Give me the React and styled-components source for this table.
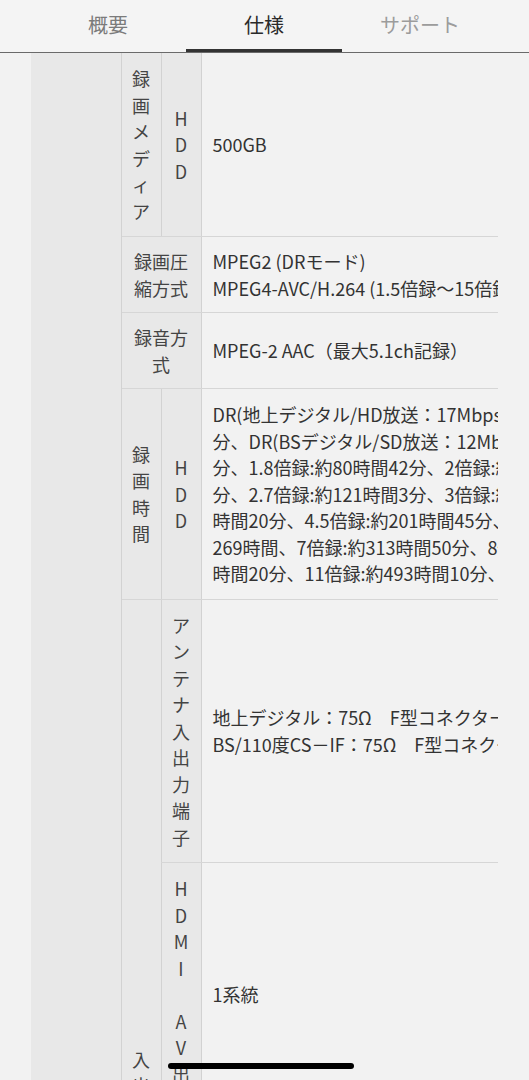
import React from "react";
import styled, { createGlobalStyle } from "styled-components";

const GlobalStyle = createGlobalStyle`
  html, body {
    margin: 0;
    padding: 0;
  }
  body {
    background: #f2f2f2;
    font-family: "Noto Sans CJK JP", "Noto Sans", sans-serif;
    color: #333;
    width: 529px;
    overflow: hidden;
  }
`;

const TabBar = styled.nav`
  display: flex;
  height: 52px;
  padding-left: 30px;
  background: #f4f4f4;
  border-bottom: 1px solid #6a6a6a;
`;

const Tab = styled.div`
  width: 156px;
  box-sizing: border-box;
  display: flex;
  align-items: center;
  justify-content: center;
  font-size: 20px;
  color: ${(p) => (p.$active ? "#2a2a2a" : p.$muted ? "#9c9c9c" : "#7b7b7b")};
  border-bottom: 3px solid ${(p) => (p.$active ? "#333" : "transparent")};
`;

const TableWrap = styled.div`
  margin-left: 31px;
  width: 467px;
  overflow: hidden;
`;

const SpecTable = styled.table`
  width: 467px;
  table-layout: fixed;
  border-collapse: collapse;
  font-size: 18px;
  line-height: 26.5px;
`;

const Outer = styled.td`
  background: #e8e8e8;
  border-right: 1px solid #d2d2d2;
  padding: 0;
`;

const Head = styled.th`
  background: #e8e8e8;
  font-weight: normal;
  color: #444;
  text-align: center;
  vertical-align: middle;
  padding: ${(p) => (p.$tight ? "11px 12px" : "12px 0")};
  border-left: 1px solid #d2d2d2;
  border-bottom: 1px solid #d6d6d6;
`;

const Value = styled.td`
  background: #f2f2f2;
  white-space: nowrap;
  vertical-align: middle;
  padding: ${(p) => (p.$tight ? "11px 11px" : "12px 11px")};
  border-left: 1px solid #d2d2d2;
  border-bottom: 1px solid #d6d6d6;
`;

const Char = styled.span`
  display: block;
  height: 26.5px;
`;

const HomeBar = styled.div`
  position: fixed;
  left: 168px;
  bottom: 11px;
  width: 186px;
  height: 6px;
  border-radius: 3px;
  background: #000;
`;

function VText({ text }) {
  return text.split("").map((c, i) => (
    <Char key={i}>{c === " " ? "\u00a0" : c}</Char>
  ));
}

function Lines({ lines }) {
  return lines.map((l, i) => <div key={i}>{l}</div>);
}

const recTime = [
  "DR(地上デジタル/HD放送：17Mbps)：約62時間",
  "分、DR(BSデジタル/SD放送：12Mbps)：約89時間",
  "分、1.8倍録:約80時間42分、2倍録:約89時間",
  "分、2.7倍録:約121時間3分、3倍録:約134時間",
  "時間20分、4.5倍録:約201時間45分、5倍録",
  "269時間、7倍録:約313時間50分、8倍録:約358",
  "時間20分、11倍録:約493時間10分、15倍録",
];

export default function App() {
  return (
    <>
      <GlobalStyle />
      <TabBar>
        <Tab>概要</Tab>
        <Tab $active>仕様</Tab>
        <Tab $muted>サポート</Tab>
      </TabBar>
      <TableWrap>
        <SpecTable>
          <colgroup>
            <col style={{ width: 90 }} />
            <col style={{ width: 40 }} />
            <col style={{ width: 40 }} />
            <col />
          </colgroup>
          <tbody>
            <tr>
              <Outer rowSpan={10} />
              <Head><VText text="録画メディア" /></Head>
              <Head><VText text="HDD" /></Head>
              <Value>500GB</Value>
            </tr>
            <tr>
              <Head colSpan={2} $tight>録画圧縮方式</Head>
              <Value $tight>
                <Lines lines={["MPEG2 (DRモード)", "MPEG4-AVC/H.264 (1.5倍録～15倍録)"]} />
              </Value>
            </tr>
            <tr>
              <Head colSpan={2} $tight>録音方式</Head>
              <Value $tight>MPEG-2 AAC（最大5.1ch記録）</Value>
            </tr>
            <tr>
              <Head><VText text="録画時間" /></Head>
              <Head><VText text="HDD" /></Head>
              <Value><Lines lines={recTime} /></Value>
            </tr>
            <tr>
              <Head rowSpan={5}><VText text="入出力" /></Head>
              <Head><VText text="アンテナ入出力端子" /></Head>
              <Value>
                <Lines lines={["地上デジタル：75Ω　F型コネクター入力/出力", "BS/110度CS－IF：75Ω　F型コネクター入力"]} />
              </Value>
            </tr>
            <tr>
              <Head><VText text="HDMI AV出力" /></Head>
              <Value>1系統</Value>
            </tr>
            <tr>
              <Head><VText text="USB端子" /></Head>
              <Value>1系統</Value>
            </tr>
            <tr>
              <Head><VText text="LAN端子" /></Head>
              <Value>1系統</Value>
            </tr>
            <tr>
              <Head><VText text="映像出力" /></Head>
              <Value>1系統</Value>
            </tr>
          </tbody>
        </SpecTable>
      </TableWrap>
      <HomeBar />
    </>
  );
}
